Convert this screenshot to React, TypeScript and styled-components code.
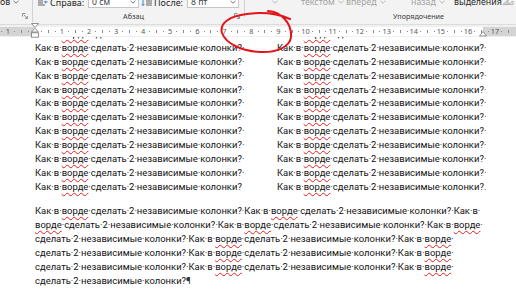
import styled, { createGlobalStyle } from "styled-components"

const GlobalStyle = createGlobalStyle`
    html, body {
        margin: 0;
        padding: 0;
        background: #ffffff;
    }
    body {
        overflow: hidden;
    }
`

const Window = styled.div`
    position: relative;
    display: flex;
    flex-direction: column;

    width: 516px;
    height: 289px;
    overflow: hidden;

    background: #ffffff;
    font-family: "Noto Sans", "Open Sans", sans-serif;
`

/* ribbon */

const Ribbon = styled.div`
    flex: none;
    display: grid;
    grid-template-columns: 33px 212px 1fr;
    align-items: start;

    height: 24px;
    overflow: hidden;

    background: #f3f3f3;
    border-bottom: 1px solid #dcdcdc;
`
const Group = styled.div<{ $sepHeight?: number }>`
    position: relative;
    display: flex;
    flex-direction: column;
    min-width: 0;

    &::after {
        content: "";
        position: absolute;
        top: 0;
        right: 0;
        width: 1px;
        height: ${(p) => p.$sepHeight ?? 0}px;
        background: #d2d2d2;
    }
`
const Controls = styled.div<{ $pad?: number }>`
    display: flex;
    align-items: center;

    height: 12px;
    margin-top: -4px;
    padding-left: ${(p) => p.$pad ?? 0}px;

    font-size: 9px;
    color: #262626;
    white-space: nowrap;
`
const ControlLabel = styled.span<{ $width: number }>`
    flex: none;
    width: ${(p) => p.$width}px;
    padding-left: 2px;
`
const SpinBox = styled.div<{ $width: number }>`
    display: flex;
    align-items: center;
    justify-content: space-between;
    flex: none;

    width: ${(p) => p.$width}px;
    height: 12px;
    box-sizing: border-box;
    padding: 0 2px 0 3px;

    background: #ffffff;
    border: 1px solid #c6c6c6;
    font-size: 8.6px;
    color: #444;
`
const LabelRow = styled.div<{ $pad?: number; $justify?: string }>`
    display: flex;
    align-items: center;
    justify-content: ${(p) => p.$justify ?? "center"};

    height: 10px;
    margin-top: 3px;
    padding-left: ${(p) => p.$pad ?? 0}px;
    padding-right: 5px;
`
const GroupLabel = styled.span<{ $grow?: boolean }>`
    flex: ${(p) => (p.$grow ? "1" : "none")};
    text-align: center;

    font-size: 7.2px;
    line-height: 10px;
    color: #3c3c3c;
`
const RibbonButton = styled.div<{ $width?: number; $dim?: boolean }>`
    display: flex;
    align-items: center;
    gap: 3px;

    width: ${(p) => (p.$width ? `${p.$width}px` : "auto")};
    flex: none;

    font-size: 8.8px;
    color: ${(p) => (p.$dim ? "#a3a3a3" : "#2a2a2a")};
`
const Spacer = styled.span<{ $width: number }>`
    flex: none;
    width: ${(p) => p.$width}px;
`

/* ruler */

const RulerArea = styled.div`
    flex: none;
    height: 12px;
    padding-top: 2px;
    box-sizing: border-box;

    background: #f0f0f0;
`
const RulerTrack = styled.div`
    position: relative;
    display: grid;
    grid-template-columns: 34px 449px 1fr;

    height: 9px;
`
const RulerMargin = styled.div`
    background: #d4d4d4;
`
const RulerText = styled.div`
    background: #ffffff;
`
const Scale = styled.div`
    position: absolute;
    top: 0;
    left: -22.6px;
    display: flex;
    height: 9px;
`
const ScaleCell = styled.div`
    display: flex;
    align-items: center;
    justify-content: center;

    width: 6.775px;
    flex: none;
`
const ScaleNum = styled.span`
    font-size: 7.4px;
    line-height: 9px;
    color: #5a5a5a;
`
const ScaleDot = styled.span`
    width: 1px;
    height: 1px;
    background: #8a8a8a;
`
const ScaleTick = styled.span`
    width: 1px;
    height: 3px;
    background: #8a8a8a;
`
const Marker = styled.svg<{ $left: number; $top: number }>`
    position: absolute;
    left: ${(p) => p.$left}px;
    top: ${(p) => p.$top}px;
    overflow: visible;
`

/* page */

const Page = styled.div`
    flex: 1;
    overflow: hidden;

    padding: 0 34px 0 35px;

    font-family: Roboto, "Noto Sans", sans-serif;
    font-size: 9.45px;
    color: #111111;
`
const Columns = styled.div`
    display: grid;
    grid-template-columns: 207px 1fr;
    column-gap: 35px;

    margin-top: -10px;
`
const Column = styled.div`
    display: flex;
    flex-direction: column;
`
const Line = styled.div<{ $height: number }>`
    height: ${(p) => p.$height}px;
    line-height: ${(p) => p.$height}px;
    white-space: pre;
`
const Paragraph = styled.div`
    display: flex;
    flex-direction: column;
    margin-top: 10px;
`
const Misspelled = styled.span`
    text-decoration: underline wavy #e81c1c;
    text-decoration-thickness: 1px;
    text-underline-offset: 2px;
    text-decoration-skip-ink: none;
`
const Mark = styled.span`
    color: #333333;
`
const Annotation = styled.svg`
    position: absolute;
    top: 0;
    left: 0;
    pointer-events: none;
`

function Chevron({ color = "#6a6a6a" }: { color?: string }) {
    return (
        <svg width="6" height="4" viewBox="0 0 6 4">
            <path d="M0.5 0.8 L3 3.2 L5.5 0.8" fill="none" stroke={color} strokeWidth="0.9" />
        </svg>
    )
}

function Launcher() {
    return (
        <svg width="6" height="6" viewBox="0 0 6 6">
            <path d="M0.5 3.5 V0.5 H3.5" fill="none" stroke="#7a7a7a" strokeWidth="0.8" />
            <path d="M1.8 1.8 L5.4 5.4 M5.4 3 V5.4 H3" fill="none" stroke="#7a7a7a" strokeWidth="0.8" />
        </svg>
    )
}

function IndentRightIcon() {
    return (
        <svg width="10" height="8" viewBox="0 0 10 8" style={{ flex: "none" }}>
            <path d="M0 1 H7 M0 3 H5 M0 5 H5 M0 7 H7" stroke="#555" strokeWidth="0.9" />
            <path d="M9.6 4 H6.6 M7.8 2.8 L6.6 4 L7.8 5.2" fill="none" stroke="#2a78d4" strokeWidth="1" />
        </svg>
    )
}

function SpaceAfterIcon() {
    return (
        <svg width="11" height="8" viewBox="0 0 11 8" style={{ flex: "none" }}>
            <path d="M2 0.5 V7.5 M0.6 1.9 L2 0.5 L3.4 1.9 M0.6 6.1 L2 7.5 L3.4 6.1" fill="none" stroke="#2a78d4" strokeWidth="0.9" />
            <path d="M5 1 H11 M5 3 H11 M5 5 H11 M5 7 H11" stroke="#555" strokeWidth="0.9" />
        </svg>
    )
}

function SelectionPaneIcon() {
    return (
        <svg width="12" height="6" viewBox="0 0 12 6" style={{ flex: "none" }}>
            <path d="M1 5.5 L6 1 L6 5.5 Z" fill="#d6d6d6" stroke="#9c9c9c" strokeWidth="0.7" />
            <path d="M6 5.5 L11 2 L11 5.5 Z" fill="#e4e4e4" stroke="#a6a6a6" strokeWidth="0.7" />
        </svg>
    )
}

const PHRASE = "Как·в·ворде·сделать·2·независимые·колонки?"

const PARAGRAPH = [
    `${PHRASE}·${PHRASE}·Как·в·`,
    `ворде·сделать·2·независимые·колонки?·${PHRASE}·Как·в·ворде·`,
    `сделать·2·независимые·колонки?·${PHRASE}·Как·в·ворде·`,
    `сделать·2·независимые·колонки?·${PHRASE}·Как·в·ворде·`,
    `сделать·2·независимые·колонки?·${PHRASE}·Как·в·ворде·`,
    "сделать·2·независимые·колонки?",
]

function renderText(text: string) {
    const parts = text.split("ворде")
    return parts.map((part, i) => (
        <span key={i}>
            {i > 0 && <Misspelled>ворде</Misspelled>}
            {part}
        </span>
    ))
}

const COLUMN_LINES = 12

function ColumnBlock({ ending }: { ending: string }) {
    return (
        <Column>
            {Array.from({ length: COLUMN_LINES }, (_, i) => (
                <Line $height={13.9} key={i}>
                    {renderText(PHRASE)}
                    {i < COLUMN_LINES - 1 ? "·" : <Mark>{ending}</Mark>}
                </Line>
            ))}
        </Column>
    )
}

function RulerScale() {
    const cells = []
    for (let i = -8; i <= 70; i++) {
        let content
        if (i % 4 === 0) {
            content = i === 0 ? null : <ScaleNum>{Math.abs(i / 4)}</ScaleNum>
        } else if (Math.abs(i % 4) === 2) {
            content = <ScaleTick />
        } else {
            content = <ScaleDot />
        }
        cells.push(<ScaleCell key={i}>{content}</ScaleCell>)
    }
    return <Scale>{cells}</Scale>
}

export default function App() {
    return (
        <>
            <GlobalStyle />
            <Window>
                <Ribbon>
                    <Group $sepHeight={22}>
                        <Controls>
                            <RibbonButton>
                                ов <Chevron />
                            </RibbonButton>
                        </Controls>
                        <LabelRow $justify="flex-end">
                            <Launcher />
                        </LabelRow>
                    </Group>
                    <Group $sepHeight={17}>
                        <Controls $pad={5}>
                            <IndentRightIcon />
                            <ControlLabel $width={38}>Справа:</ControlLabel>
                            <SpinBox $width={51}>
                                0 см <Chevron />
                            </SpinBox>
                            <Spacer $width={2} />
                            <SpaceAfterIcon />
                            <ControlLabel $width={33}>После:</ControlLabel>
                            <SpinBox $width={52}>
                                8 пт <Chevron />
                            </SpinBox>
                        </Controls>
                        <LabelRow>
                            <GroupLabel $grow>Абзац</GroupLabel>
                            <Launcher />
                        </LabelRow>
                    </Group>
                    <Group>
                        <Controls $pad={27}>
                            <RibbonButton $width={29} $dim>
                                <Chevron color="#b0b0b0" />
                            </RibbonButton>
                            <RibbonButton $width={45} $dim>
                                текстом <Chevron color="#b0b0b0" />
                            </RibbonButton>
                            <RibbonButton $width={65} $dim>
                                вперед <Chevron color="#b0b0b0" />
                            </RibbonButton>
                            <RibbonButton $width={43} $dim>
                                назад <Chevron color="#b0b0b0" />
                            </RibbonButton>
                            <RibbonButton $width={48}>выделения</RibbonButton>
                            <SelectionPaneIcon />
                        </Controls>
                        <LabelRow $pad={148} $justify="flex-start">
                            <GroupLabel>Упорядочение</GroupLabel>
                        </LabelRow>
                    </Group>
                </Ribbon>

                <RulerArea>
                    <RulerTrack>
                        <RulerMargin />
                        <RulerText />
                        <RulerMargin />
                        <RulerScale />
                        <Marker $left={31} $top={-4} width="8" height="15" viewBox="0 0 8 15">
                            <path d="M0.5 0.5 H7.5 L4 4.5 Z" fill="#fff" stroke="#767676" strokeWidth="0.8" />
                            <path d="M4 5.2 L7.5 9 H0.5 Z" fill="#fff" stroke="#767676" strokeWidth="0.8" />
                            <rect x="0.5" y="9.8" width="7" height="4.4" fill="#fff" stroke="#767676" strokeWidth="0.8" />
                        </Marker>
                        <Marker $left={479} $top={4} width="8" height="6" viewBox="0 0 8 6">
                            <path d="M4 0.5 L7.5 5 H0.5 Z" fill="#fff" stroke="#767676" strokeWidth="0.8" />
                        </Marker>
                    </RulerTrack>
                </RulerArea>

                <Page>
                    <Columns>
                        <ColumnBlock ending="" />
                        <ColumnBlock ending="." />
                    </Columns>
                    <Paragraph>
                        {PARAGRAPH.map((text, i) => (
                            <Line $height={14} key={i}>
                                {renderText(text)}
                                {i === PARAGRAPH.length - 1 && <Mark>¶</Mark>}
                            </Line>
                        ))}
                    </Paragraph>
                </Page>

                <Annotation width="516" height="289" viewBox="0 0 516 289">
                    <path
                        d="M268 11 C282 12 292 24 291 37 C290 47 276 53 260 52 C242 51 226 44 222 33 C219 23 230 16 247 14 C262 12 276 13 290 19"
                        fill="none"
                        stroke="#e3151b"
                        strokeWidth="2"
                        strokeLinecap="round"
                    />
                </Annotation>
            </Window>
        </>
    )
}
